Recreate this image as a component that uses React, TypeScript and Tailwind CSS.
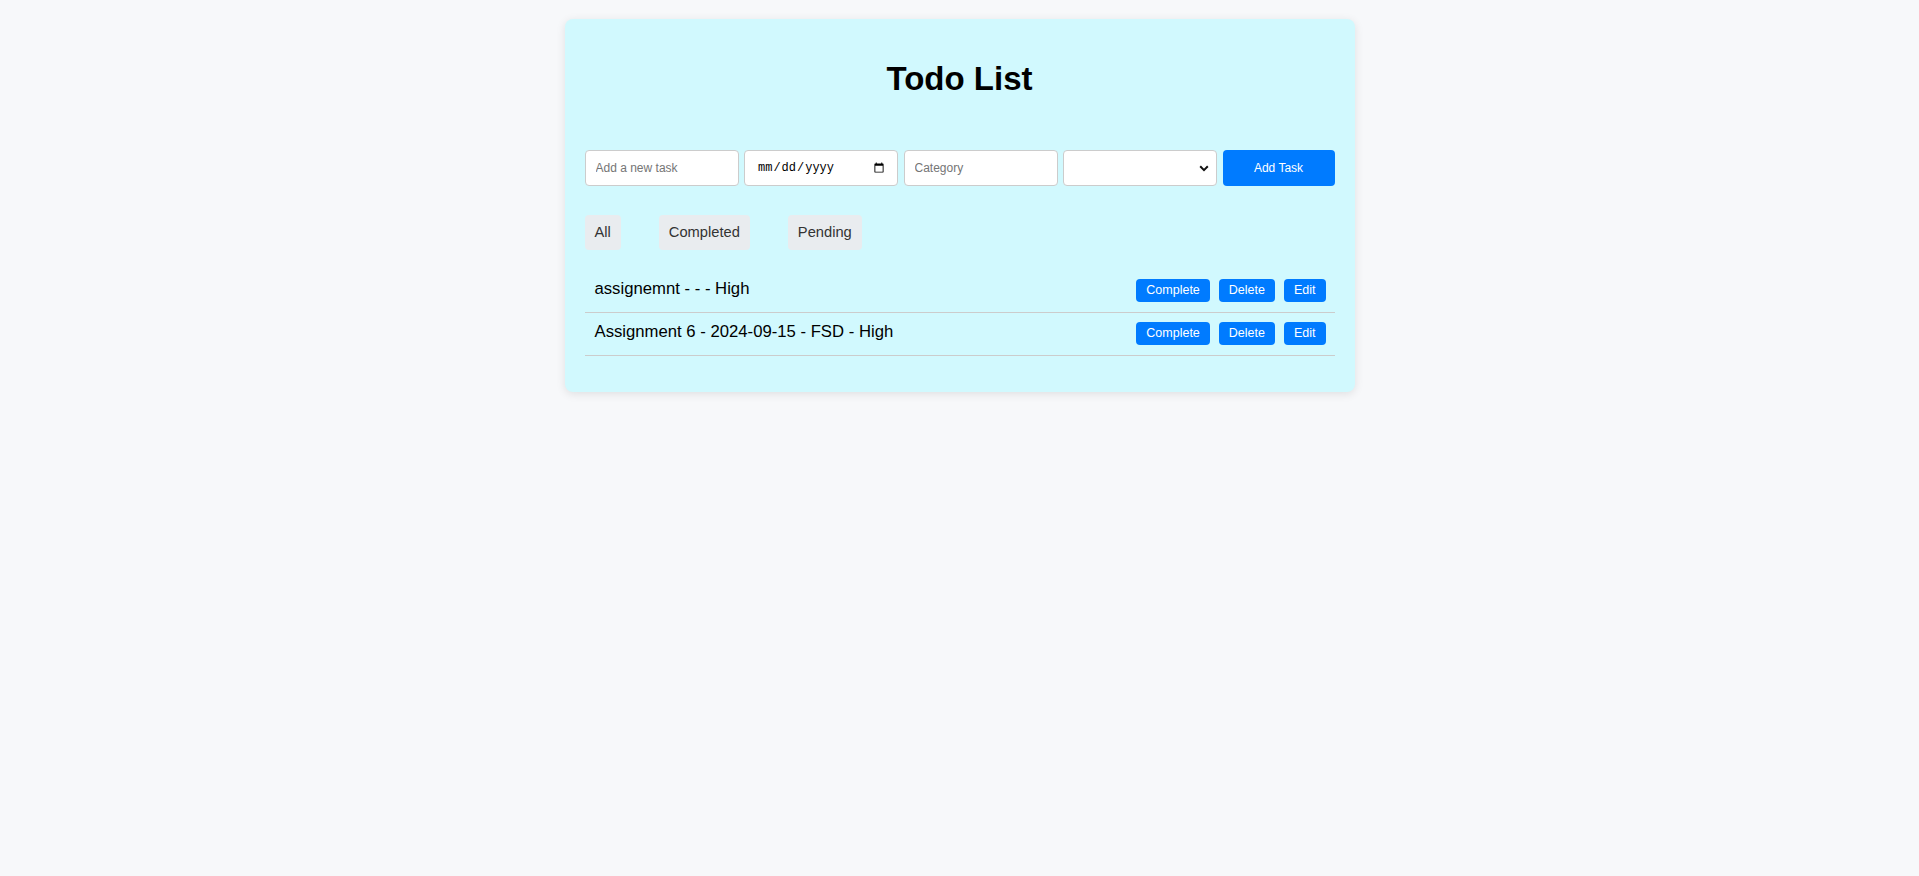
import { useState } from 'react'

interface Task {
  id: number
  text: string
  date: string
  category: string
  priority: string
}

const initialTasks: Task[] = [
  { id: 1, text: 'assignemnt', date: '', category: '', priority: 'High' },
  { id: 2, text: 'Assignment 6', date: '2024-09-15', category: 'FSD', priority: 'High' },
]

export default function App() {
  const [tasks] = useState<Task[]>(initialTasks)
  const [filter, setFilter] = useState('all')

  return (
    <div className="min-h-screen bg-[#f7f8fa] pt-[19px] font-['Liberation_Sans',Arial,sans-serif]">
      <div className="mx-auto w-[790px] rounded-[8px] bg-[#d1f9fe] px-5 pt-5 pb-[36px] shadow-[0_2px_10px_rgba(0,0,0,0.1)]">
        <h1 className="mt-[21px] text-center text-[33px] leading-[37px] font-bold text-black">Todo List</h1>

        {/* 입력 폼 */}
        <div className="mt-[53px] flex h-[36px] gap-[5.5px]">
          <input
            type="text"
            placeholder="Add a new task"
            className="w-[154px] shrink-0 rounded-[4px] border border-[#ccc] bg-white px-[10px] text-[12px] text-black placeholder:text-[#757575] outline-none"
          />
          <input
            type="date"
            className="w-[154px] shrink-0 rounded-[4px] border border-[#ccc] bg-white pr-[10px] pl-[12px] font-['Liberation_Mono',monospace] text-[12px] text-black outline-none"
          />
          <input
            type="text"
            placeholder="Category"
            className="w-[154px] shrink-0 rounded-[4px] border border-[#ccc] bg-white px-[10px] text-[12px] text-black placeholder:text-[#757575] outline-none"
          />
          <div className="relative w-[154px] shrink-0">
            <select className="h-full w-full appearance-none rounded-[4px] border border-[#ccc] bg-white px-[10px] text-[12px] outline-none">
              <option value=""></option>
              <option value="High">High</option>
              <option value="Medium">Medium</option>
              <option value="Low">Low</option>
            </select>
            <svg
              className="pointer-events-none absolute top-[15px] right-[8px]"
              width="10"
              height="7"
              viewBox="0 0 10 7"
              fill="none"
            >
              <path d="M1.2 1.3 5 5.1 8.8 1.3" stroke="#111" strokeWidth="2" />
            </svg>
          </div>
          <button className="flex-1 rounded-[4px] bg-[#007bff] text-[12px] text-white">Add Task</button>
        </div>

        {/* 필터 */}
        <div className="mt-[29px] flex gap-[38px]">
          {['All', 'Completed', 'Pending'].map(f => (
            <button
              key={f}
              onClick={() => setFilter(f.toLowerCase())}
              className="h-[35px] rounded-[4px] bg-[#e9ecef] px-[10px] text-[14.7px] text-[#333]"
            >
              {f}
            </button>
          ))}
        </div>

        {/* 할 일 목록 */}
        <ul className="mt-[20px]" data-filter={filter}>
          {tasks.map(task => (
            <li
              key={task.id}
              className="flex items-start justify-between border-b border-[#ccc] pt-[9px] pb-[10px] pl-[10px] pr-[9px]"
            >
              <span className="text-[16.7px] leading-[19px] text-black">
                {task.text} - {task.date} - {task.category} - {task.priority}
              </span>
              <div className="flex gap-[9px]">
                <button className="h-[23px] rounded-[4px] bg-[#007bff] px-[10px] text-[12.5px] text-white">Complete</button>
                <button className="h-[23px] rounded-[4px] bg-[#007bff] px-[10px] text-[12.5px] text-white">Delete</button>
                <button className="h-[23px] rounded-[4px] bg-[#007bff] px-[10px] text-[12.5px] text-white">Edit</button>
              </div>
            </li>
          ))}
        </ul>
      </div>
    </div>
  )
}
